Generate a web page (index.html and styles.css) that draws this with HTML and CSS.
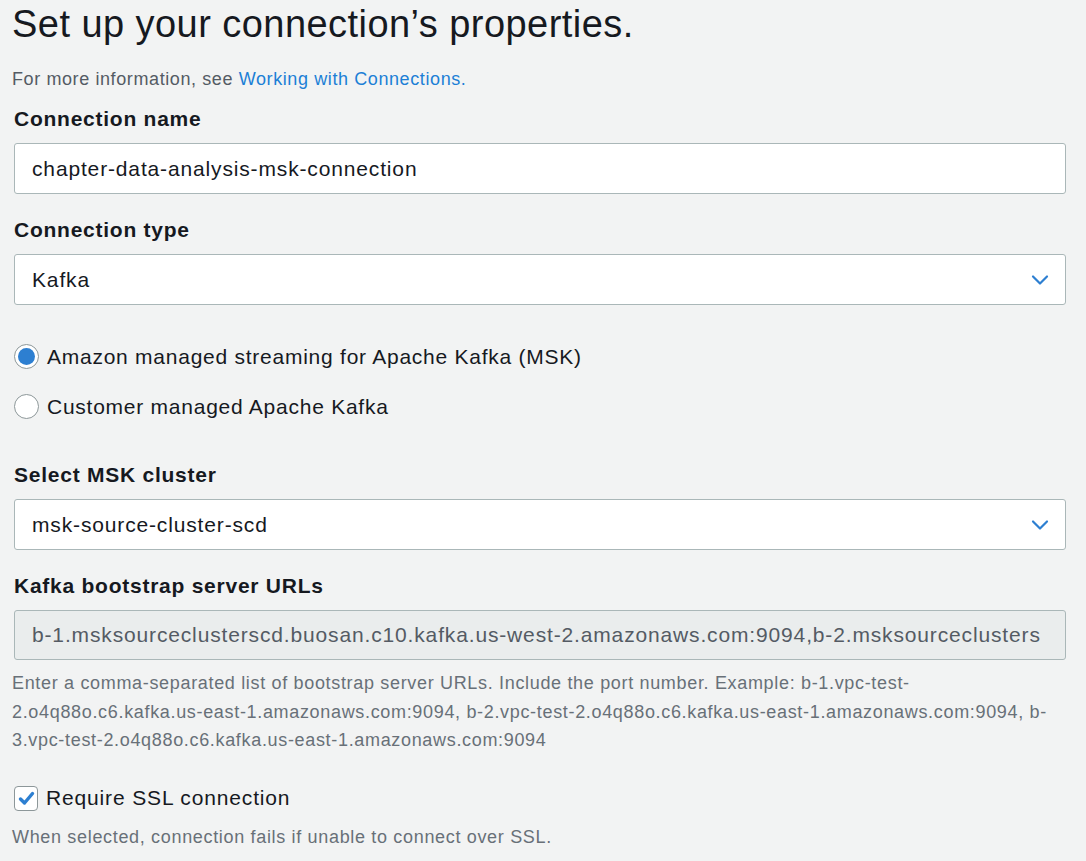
FILE: index.html
```html
<!DOCTYPE html>
<html lang="en">
<head>
<meta charset="utf-8">
<title>Set up your connection's properties</title>
<link rel="stylesheet" href="styles.css">
</head>
<body>
<main class="page">
  <h1 class="title">Set up your connection’s properties.</h1>
  <p class="intro">For more information, see <a class="link" href="#">Working with Connections.</a></p>

  <section class="field">
    <label class="label">Connection name</label>
    <div class="input">chapter-data-analysis-msk-connection</div>
  </section>

  <section class="field">
    <label class="label">Connection type</label>
    <div class="input select">
      <span>Kafka</span>
      <svg class="chevron" width="18" height="12" viewBox="0 0 18 12"><path d="M2 2.5 L9 9.5 L16 2.5" fill="none" stroke="#2d7fd1" stroke-width="2.2" stroke-linecap="round" stroke-linejoin="round"/></svg>
    </div>
  </section>

  <div class="radios">
    <div class="radio-row">
      <span class="radio checked"></span>
      <span class="radio-text">Amazon managed streaming for Apache Kafka (MSK)</span>
    </div>
    <div class="radio-row">
      <span class="radio"></span>
      <span class="radio-text">Customer managed Apache Kafka</span>
    </div>
  </div>

  <section class="field">
    <label class="label">Select MSK cluster</label>
    <div class="input select">
      <span>msk-source-cluster-scd</span>
      <svg class="chevron" width="18" height="12" viewBox="0 0 18 12"><path d="M2 2.5 L9 9.5 L16 2.5" fill="none" stroke="#2d7fd1" stroke-width="2.2" stroke-linecap="round" stroke-linejoin="round"/></svg>
    </div>
  </section>

  <section class="field">
    <label class="label">Kafka bootstrap server URLs</label>
    <div class="input disabled"><span class="clip">b-1.msksourceclusterscd.buosan.c10.kafka.us-west-2.amazonaws.com:9094,b-2.msksourceclusters</span></div>
    <p class="help">Enter a comma-separated list of bootstrap server URLs. Include the port number. Example: b-1.vpc-test-2.o4q88o.c6.kafka.us-east-1.amazonaws.com:9094, b-2.vpc-test-2.o4q88o.c6.kafka.us-east-1.amazonaws.com:9094, b-3.vpc-test-2.o4q88o.c6.kafka.us-east-1.amazonaws.com:9094</p>
  </section>

  <div class="check-row">
    <span class="checkbox">
      <svg width="17" height="15" viewBox="0 0 17 15"><path d="M2.5 8 L6.5 12 L14.5 2.5" fill="none" stroke="#2d7fd1" stroke-width="3.4" stroke-linecap="round" stroke-linejoin="round"/></svg>
    </span>
    <span class="check-text">Require SSL connection</span>
  </div>
  <p class="help ssl">When selected, connection fails if unable to connect over SSL.</p>
</main>
</body>
</html>
```

FILE: styles.css
```css
html, body {
  margin: 0;
  padding: 0;
  background: #f2f3f3;
}
body {
  font-family: "Liberation Sans", Arial, Helvetica, sans-serif;
  color: #16191f;
}
.page {
  width: 1052px;
  padding: 0 0 0 14px;
  display: flex;
  flex-direction: column;
}
.title {
  margin: 0 0 0 -2px;
  padding-top: 2px;
  font-size: 38px;
  font-weight: 400;
  letter-spacing: 0.45px;
  line-height: 44px;
}
.intro {
  margin: 21px 0 0 -2px;
  font-size: 18px;
  letter-spacing: 0.6px;
  line-height: 24px;
  color: #545b64;
}
.link {
  color: #1c7fd6;
  text-decoration: none;
}
.field {
  display: flex;
  flex-direction: column;
}
.label {
  font-size: 21px;
  font-weight: 700;
  letter-spacing: 0.75px;
  line-height: 24px;
  margin-top: 16px;
  margin-bottom: 12px;
}
.field + .field .label { margin-top: 24px; }
.input {
  box-sizing: border-box;
  height: 51px;
  border: 1px solid #aab7b8;
  border-radius: 3px;
  background: #ffffff;
  padding: 0 17px;
  font-size: 21px;
  letter-spacing: 0.85px;
  display: flex;
  align-items: center;
  white-space: nowrap;
  overflow: hidden;
}
.select {
  justify-content: space-between;
  padding-right: 16px;
}
.chevron { flex: none; }
.disabled {
  height: 50px;
  background: #eaeded;
  color: #545b64;
  padding: 0 22px 0 17px;
}
.clip {
  flex: 1;
  min-width: 0;
  overflow: hidden;
}
.radios {
  display: flex;
  flex-direction: column;
  gap: 25px;
  margin-top: 39px;
  margin-bottom: 28px;
}
.radio-row, .check-row {
  display: flex;
  align-items: center;
  gap: 8px;
  height: 25px;
  font-size: 21px;
  letter-spacing: 0.75px;
}
.radio {
  box-sizing: border-box;
  width: 25px;
  height: 25px;
  border-radius: 50%;
  border: 1px solid #8d9799;
  background: #ffffff;
  flex: none;
  display: flex;
  align-items: center;
  justify-content: center;
}
.radio.checked::after {
  content: "";
  width: 17px;
  height: 17px;
  border-radius: 50%;
  background: #2d7fd1;
}
.help {
  margin: 9px 0 0 -2px;
  font-size: 18px;
  letter-spacing: 0.67px;
  line-height: 28.5px;
  color: #687078;
}
.check-row {
  margin-top: 31px;
}
.check-text {
  letter-spacing: 0.85px;
}
.checkbox {
  box-sizing: border-box;
  width: 24px;
  height: 25px;
  border: 1px solid #8d9799;
  border-radius: 4px;
  background: #ffffff;
  flex: none;
  display: flex;
  align-items: center;
  justify-content: center;
}
.help.ssl {
  margin-top: 12px;
}
```
